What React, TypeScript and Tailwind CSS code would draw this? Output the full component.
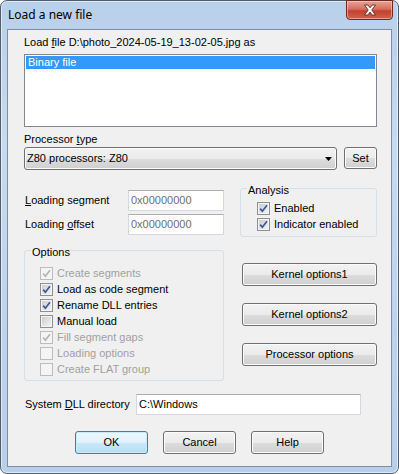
import React from 'react';

const btnBase =
  'flex items-center justify-center rounded-[3px] border border-[#707070] bg-[linear-gradient(to_bottom,#f2f2f2_0%,#ebebeb_50%,#dddddd_51%,#cfcfcf_100%)] shadow-[inset_0_0_0_1px_#fcfcfc] text-black';

function Button({ label, className }: { label: React.ReactNode; className: string }) {
  return <div className={`${btnBase} ${className}`}>{label}</div>;
}

function Check({ checked, disabled }: { checked?: boolean; disabled?: boolean }) {
  return (
    <span
      className={
        disabled
          ? 'flex h-[13px] w-[13px] shrink-0 items-center justify-center border border-[#bcbcbc] bg-[#f4f4f4]'
          : 'flex h-[13px] w-[13px] shrink-0 items-center justify-center border border-[#8e8f8f] bg-[linear-gradient(135deg,#c6cad0,#f6f6f6)] shadow-[inset_0_0_0_1px_#f4f4f4]'
      }
    >
      {checked && (
        <svg width="9" height="9" viewBox="0 0 9 9">
          <path
            d="M1.2 4.6 L3.4 7.2 L7.9 1.2"
            fill="none"
            stroke={disabled ? '#b4b4b4' : '#3b5795'}
            strokeWidth="1.7"
          />
        </svg>
      )}
    </span>
  );
}

function CheckRow({ label, checked, disabled }: { label: string; checked?: boolean; disabled?: boolean }) {
  return (
    <div className="flex h-[16px] items-center gap-[4px]">
      <Check checked={checked} disabled={disabled} />
      <span className={disabled ? 'text-[#a0a0a0]' : 'text-black'}>{label}</span>
    </div>
  );
}

function TextBox({ value, className, gray }: { value: string; className: string; gray?: boolean }) {
  return (
    <div
      className={`flex items-center border border-[#d5d8de] border-t-[#abadb3] bg-white pl-[2px] ${gray ? 'text-[#6d6d6d]' : 'text-black'} ${className}`}
    >
      {value}
    </div>
  );
}

const options = [
  { label: 'Create segments', checked: true, disabled: true },
  { label: 'Load as code segment', checked: true },
  { label: 'Rename DLL entries', checked: true },
  { label: 'Manual load', checked: false },
  { label: 'Fill segment gaps', checked: true, disabled: true },
  { label: 'Loading options', checked: false, disabled: true },
  { label: 'Create FLAT group', checked: false, disabled: true },
];

export default function App() {
  return (
    <div className="h-[474px] w-[399px] font-['Liberation_Sans',Arial,sans-serif] text-[11px] leading-[13px] text-black">
      <div className="flex h-full flex-col rounded-[7px] border border-[#4f5d6e] bg-[linear-gradient(to_bottom,#b9d0ea_0%,#c6daf0_30%,#b7cfeb_100%)] shadow-[inset_0_0_0_1px_rgba(255,255,255,0.55)]">
        {/* title bar */}
        <div className="flex h-[28px] items-start justify-between">
          <span className="ml-[7px] mt-[6px] font-['Noto_Sans',sans-serif] text-[12px] leading-[16px] text-black">
            Load a new file
          </span>
          <div className="-mt-[1px] mr-[5px] flex h-[20px] w-[47px] items-center justify-center rounded-b-[4px] border border-[#6e2a22] bg-[linear-gradient(to_bottom,#e8a394_0%,#d66f5e_45%,#c3412c_55%,#d0644d_100%)] shadow-[inset_0_0_0_1px_rgba(255,220,210,0.5)]">
            <svg width="14" height="12" viewBox="0 0 14 12">
              <path
                d="M1.5 1 H4.8 L7 3.8 L9.2 1 H12.5 L8.8 6 L12.5 11 H9.2 L7 8.2 L4.8 11 H1.5 L5.2 6 Z"
                fill="#ffffff"
                stroke="#5a2a24"
                strokeWidth="0.9"
                strokeLinejoin="round"
              />
            </svg>
          </div>
        </div>

        {/* client area */}
        <div className="mx-[6px] mb-[6px] flex-1 border border-[#7d8da2] bg-[#f0f0f0]">
          <div className="ml-[16px] flex w-[353px] flex-col">
            <div className="mt-[6px] h-[13px]">
              Load <span className="underline">f</span>ile D:\photo_2024-05-19_13-02-05.jpg as
            </div>
            <div className="mt-[5px] h-[73px] border border-[#828790] bg-white p-[1px]">
              <div className="h-[13px] bg-[#3399ff] pl-[2px] text-white">Binary file</div>
            </div>

            <div className="mt-[6px] h-[13px]">
              Processor <span className="underline">t</span>ype
            </div>
            <div className="mt-[1px] flex items-start">
              <div className="flex h-[23px] w-[313px] items-center justify-between rounded-[3px] border border-[#707070] bg-[linear-gradient(to_bottom,#f2f2f2_0%,#ebebeb_50%,#dddddd_51%,#cfcfcf_100%)] pl-[2px] pr-[4px] shadow-[inset_0_0_0_1px_#fcfcfc]">
                <span>Z80 processors: Z80</span>
                <svg width="7" height="4" viewBox="0 0 7 4">
                  <path d="M0 0 H7 L3.5 4 Z" fill="#000" />
                </svg>
              </div>
              <Button label="Set" className="ml-[7px] h-[22px] w-[33px]" />
            </div>

            <div className="flex items-start">
              {/* left column */}
              <div className="flex w-[200px] flex-col">
                <div className="mt-[20px] flex h-[21px] items-center">
                  <span className="w-[104px] pl-[1px]">
                    <span className="underline">L</span>oading segment
                  </span>
                  <TextBox value="0x00000000" gray className="h-[21px] w-[96px]" />
                </div>
                <div className="mt-[3px] flex h-[21px] items-center">
                  <span className="w-[104px] pl-[1px]">
                    Loading <span className="underline">o</span>ffset
                  </span>
                  <TextBox value="0x00000000" gray className="h-[21px] w-[96px]" />
                </div>

                <fieldset className="mt-[7px] rounded-[3px] border border-[#d5dfe5] pb-[3px]">
                  <legend className="ml-[6px] px-[1px] pt-[4px] leading-[13px]">Options</legend>
                  <div className="mt-[6px] flex flex-col pl-[15px]">
                    {options.map((o) => (
                      <CheckRow key={o.label} label={o.label} checked={o.checked} disabled={o.disabled} />
                    ))}
                  </div>
                </fieldset>
              </div>

              {/* right column */}
              <div className="ml-[16px] flex w-[137px] flex-col">
                <fieldset className="mt-[10px] rounded-[3px] border border-[#d5dfe5] pb-[4px]">
                  <legend className="ml-[6px] px-[1px] pt-[4px] leading-[13px]">Analysis</legend>
                  <div className="mt-[3px] flex flex-col pl-[16px]">
                    <CheckRow label="Enabled" checked />
                    <CheckRow label="Indicator enabled" checked />
                  </div>
                </fieldset>
                <Button label="Kernel options1" className="ml-[2px] mt-[26px] h-[23px] w-[135px]" />
                <Button label="Kernel options2" className="ml-[2px] mt-[17px] h-[23px] w-[135px]" />
                <Button label="Processor options" className="ml-[2px] mt-[17px] h-[23px] w-[135px]" />
              </div>
            </div>

            <div className="mt-[13px] flex h-[21px] items-center">
              <span className="w-[112px] pl-[1px]">
                System <span className="underline">D</span>LL directory
              </span>
              <TextBox value="C:\Windows" className="h-[21px] w-[225px]" />
            </div>

            <div className="mt-[16px] flex">
              <div className="ml-[51px] flex h-[23px] w-[73px] items-center justify-center rounded-[3px] border border-[#3c7fb1] bg-[linear-gradient(to_bottom,#eef7fd_0%,#e1f1fb_50%,#cbe8fa_51%,#b9ddf4_100%)] shadow-[inset_0_0_0_1px_#c6ecfc]">
                OK
              </div>
              <Button label="Cancel" className="ml-[15px] h-[23px] w-[73px]" />
              <Button label="Help" className="ml-[15px] h-[23px] w-[73px]" />
            </div>
          </div>
        </div>
      </div>
    </div>
  );
}
